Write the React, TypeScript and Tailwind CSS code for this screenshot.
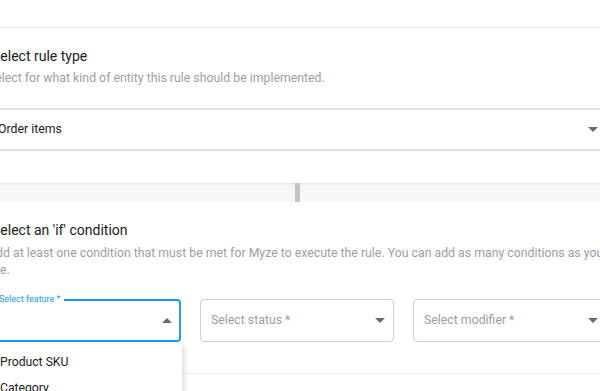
import React from "react";

function Caret({ up = false }: { up?: boolean }) {
  return (
    <svg width="10" height="5" viewBox="0 0 10 5" className="shrink-0">
      {up ? <path d="M0 5 L5 0 L10 5 Z" fill="#6b6b6b" /> : <path d="M0 0 L5 5 L10 0 Z" fill="#6b6b6b" />}
    </svg>
  );
}

export default function App() {
  return (
    <div
      className="w-[600px] h-[391px] overflow-hidden bg-[#f7f7f7] relative"
      style={{ fontFamily: "Roboto, 'Liberation Sans', sans-serif" }}
    >
      <div className="ml-[-13px] w-[620px]">
        {/* top remnant */}
        <div className="h-[28px] bg-white border-b border-[#eeeeee]" />
        {/* card 1 */}
        <div className="bg-white h-[155px] shadow-[0_1px_3px_rgba(0,0,0,0.08)] flex flex-col">
          <div className="pl-[5px] pt-[18px] text-[14px] leading-[20px] text-[#212121]">Select rule type</div>
          <div className="pl-[1px] mt-[4px] text-[12.3px] leading-[16px] text-[#9e9e9e]">
            Select for what kind of entity this rule should be implemented.
          </div>
          <div className="mt-[22px] h-[43px] border-y-2 border-[#e0e0e0] flex items-center justify-between pl-[11px] pr-[9px]">
            <span className="text-[12.3px] text-[#212121]">Order items</span>
            <Caret />
          </div>
        </div>
        {/* gap with scroll handle */}
        <div className="h-[19px] relative">
          <div className="absolute left-[308px] top-0 w-[5px] h-[19px] bg-[#c4c4c4]" />
        </div>
        {/* card 2 */}
        <div className="bg-white h-[200px] flex flex-col relative">
          <div className="pl-[5px] pt-[18px] text-[14px] leading-[20px] text-[#212121]">Select an 'if' condition</div>
          <div className="pl-[1px] mt-[5px] text-[12.3px] leading-[17px] text-[#9e9e9e] w-[624px]">
            Add at least one condition that must be met for Myze to execute the rule. You can add as many conditions as you like.
          </div>
          <div className="mt-[20px] grid grid-cols-3 gap-[19px]">
            <div className="relative h-[43px] rounded-[4px] border-2 border-[#2196f3] flex items-center justify-end pr-[7px]">
              <span className="absolute left-[6px] top-[-8px] bg-white px-[4px] text-[9px] leading-[12px] text-[#2196f3]">
                Select feature *
              </span>
              <Caret up />
            </div>
            <div className="h-[43px] rounded-[4px] border border-[#cfcfcf] flex items-center justify-between pl-[10px] pr-[8px]">
              <span className="text-[12.3px] text-[#9e9e9e]">Select status *</span>
              <Caret />
            </div>
            <div className="h-[43px] rounded-[4px] border border-[#cfcfcf] flex items-center justify-between pl-[10px] pr-[8px]">
              <span className="text-[12.3px] text-[#9e9e9e]">Select modifier *</span>
              <Caret />
            </div>
          </div>
          <div className="mt-[31px] border-t border-[#eeeeee]" />
          {/* dropdown menu */}
          <div className="absolute left-0 top-[141px] w-[195px] h-[80px] bg-white shadow-[2px_3px_6px_rgba(0,0,0,0.15)] flex flex-col pt-[6px]">
            <div className="pl-[13px] h-[26px] flex items-center text-[12.2px] text-[#212121]">Product SKU</div>
            <div className="pl-[13px] h-[26px] flex items-center text-[12.2px] text-[#212121]">Category</div>
          </div>
        </div>
      </div>
    </div>
  );
}
